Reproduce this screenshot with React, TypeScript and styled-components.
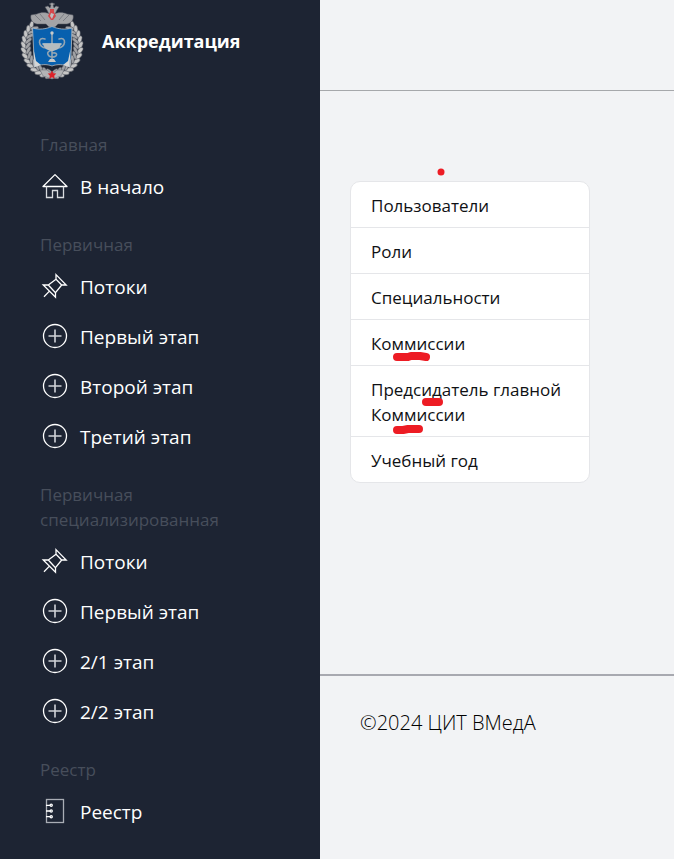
import React from "react";
import styled, { createGlobalStyle } from "styled-components";

const GlobalStyle = createGlobalStyle`
  * { box-sizing: border-box; }
  body {
    margin: 0;
    background: #f2f3f5;
    color: #000;
    font-family: "Segoe UI", "Open Sans", sans-serif;
    font-size: 18px;
    line-height: 25px;
  }
`;

const Page = styled.div`
  display: flex;
  min-height: 100vh;
`;

const Sidebar = styled.aside`
  flex: 0 0 320px;
  background: #1d2433;
  color: #fff;
`;

const Brand = styled.a`
  display: flex;
  align-items: center;
  gap: 18px;
  padding: 2px 20px;
  color: #fff;
  font-weight: 700;
  font-size: 18px;
  text-decoration: none;
`;

const Nav = styled.nav`
  display: flex;
  flex-direction: column;
  gap: 20px;
  padding: 49px 40px 20px;
`;

const SectionTitle = styled.h2`
  margin: 0 0 5px;
  color: #474e5b;
  font-size: 17px;
  font-weight: 500;
  line-height: 25px;
`;

const NavList = styled.ul`
  margin: 0;
  padding: 0;
  list-style: none;
`;

const NavLink = styled.a`
  display: flex;
  align-items: center;
  gap: 10px;
  height: 50px;
  color: #fff;
  font-size: 19px;
  text-decoration: none;
`;

const Main = styled.div`
  display: flex;
  flex: 1;
  flex-direction: column;
  min-width: 0;
`;

const TopBar = styled.header`
  height: 91px;
  border-bottom: 1px solid #a6a8ab;
`;

const Content = styled.main`
  flex: 1;
  padding: 90px 30px;
`;

const Menu = styled.ul`
  position: relative;
  width: 240px;
  max-width: 100%;
  margin: 0;
  padding: 0;
  list-style: none;
  background: #fff;
  border: 1px solid #e5e6e9;
  border-radius: 10px;
`;

const MenuItem = styled.li`
  position: relative;
  border-bottom: 1px solid #e5e6e9;
  &:last-child { border-bottom: 0; }
`;

const MenuLink = styled.a`
  display: block;
  padding: 11px 20px 9px;
  color: #0f1114;
  font-size: 17px;
  text-decoration: none;
`;

const Mark = styled.svg<{ $left: number; $top: number }>`
  position: absolute;
  left: ${(p) => p.$left}px;
  top: ${(p) => p.$top}px;
  fill: none;
  stroke: #ed1c24;
  stroke-width: 8;
  stroke-linecap: round;
  stroke-linejoin: round;
  pointer-events: none;
`;

const Footer = styled.footer`
  height: 185px;
  padding: 34px 40px;
  border-top: 2px solid #a8a9b0;
  font-size: 20px;
  font-weight: 300;
`;

const IconSvg = styled.svg`
  flex: none;
  fill: none;
  stroke: #fff;
  stroke-width: 1.3;
`;

type IconName = "home" | "pin" | "plus" | "book";

const shapes: Record<IconName, React.ReactNode> = {
  home: (
    <>
      <path d="M15 2.6 27 14.5H3Z" strokeLinejoin="round" />
      <path d="M6.5 14.5v11h6v-7h5v7h6v-11" stroke="#d9dbdf" />
    </>
  ),
  pin: (
    <path d="M16 2.6 26.2 13H21.7L16 7.3ZM16 7.3 8.3 13M21.7 13 15.5 20.7M3.2 13H8.3L15.5 20.7V25.2ZM9.2 19.4 4 24.7" />
  ),
  plus: (
    <>
      <circle cx="15" cy="14" r="11.5" />
      <path d="M8.5 14h13M15 7.5v13" stroke="#d0d2d7" strokeWidth="1.6" />
    </>
  ),
  book: (
    <>
      <rect x="6.5" y="2.5" width="17" height="23" stroke="#a9adb5" />
      <path d="M6 8.3h4M6 14h4M6 19.7h4" />
      <circle cx="11.2" cy="8.3" r="1.1" />
      <circle cx="11.2" cy="14" r="1.1" />
      <circle cx="11.2" cy="19.7" r="1.1" />
    </>
  ),
};

const Icon = ({ name }: { name: IconName }) => (
  <IconSvg width="30" height="30" viewBox="0 0 30 30" aria-hidden="true">
    {shapes[name]}
  </IconSvg>
);

const leafAngles = Array.from({ length: 13 }, (_, i) => -46 + i * 10.6);

const Wreath = () => (
  <g stroke="#4b4f59" strokeWidth="0.5">
    {[1, -1].map((side) =>
      leafAngles.map((deg, i) => {
        const a = (deg * Math.PI) / 180;
        const x = 32 + side * 26 * Math.cos(a);
        const y = 44 + 28 * Math.sin(a);
        const tilt = side * (deg + 90);
        return (
          <g key={`${side}${i}`} transform={`translate(${x} ${y}) rotate(${tilt})`}>
            <ellipse cx="0" cy={-2.6} rx="4.4" ry="2" fill="#c6c6c6" transform={`rotate(${side * 32})`} />
            <ellipse cx="0" cy={2.4} rx="4.2" ry="1.7" fill="#a2a3a6" transform={`rotate(${side * -32})`} />
          </g>
        );
      })
    )}
  </g>
);

const Emblem = () => (
  <svg width="64" height="79" viewBox="0 0 64 79" role="img" aria-label="Эмблема">
    <Wreath />
    <g fill="#a3a4a7" stroke="#555963" strokeWidth="0.5">
      <path d="M30 12C26 10 21 10 17 12L11 13C10 17 12 21 17 22L26 22 29 25H35L38 22 47 22C52 21 54 17 53 13L47 12C43 10 38 10 34 12Z" />
      <path d="M27 8 25 5 28 4 30 6 31 3 29 2 32 .7 35 2 33 3 34 6 36 4 39 5 37 8 35 12H29Z" />
      <path d="M15 13 21 19M20 12 25 18M49 13 43 19M44 12 39 18" fill="none" />
    </g>
    <path d="M30 7h4v3l2 4-3 4h-2l-3-4 2-4Z" fill="#d5474b" />
    <path d="m31 11 3 1-2 5-2-3Z" fill="#bfc0c1" />
    <path
      d="M12.5 26C19 28 26 27 32 24.5 38 27 45 28 52 26L51 55 49.5 65C43 62 37 62 32 64 27 62 21 62 14.5 65L14 55Z"
      fill="#0860ae"
      stroke="#b7bec4"
      strokeWidth="0.8"
    />
    <path d="M13.5 47 16 59 21 63 14.5 65ZM50.5 47 48 59 43 63 49.5 65Z" fill="#d5d6d6" />
    <g fill="none" stroke="#93a5b3" strokeWidth="1.6" strokeLinecap="round">
      <path d="M32 31V57M25 37C17 34 18 46 26 46H38C46 46 47 34 39 37M32 48C24 50 29 55 32 55 38 55 38 50 33 51" />
      <path d="M23 42H41" stroke="#c9ccca" />
    </g>
    <path d="M23 42H41C40 47 35 49 32 49S24 47 23 42Z" fill="#b5bcbf" />
    <path d="M28 60 30 57H34L36 60Z" fill="#c6c9c9" />
    <circle cx="32" cy="31" r="1.7" fill="#c8caca" />
    <path d="M20 68 27 68 32 72 37 68 44 68 41 74 32 77 23 74Z" fill="#b3b4b6" stroke="#656873" strokeWidth="0.5" />
    <path d="m32 68.5 1.3 2.7 3 .4-2.1 2.1.5 3-2.7-1.4-2.7 1.4.5-3-2.1-2.1 3-.4Z" fill="#dc2229" />
  </svg>
);

const sections: { title: string; items: [IconName, string][] }[] = [
  { title: "Главная", items: [["home", "В начало"]] },
  {
    title: "Первичная",
    items: [
      ["pin", "Потоки"],
      ["plus", "Первый этап"],
      ["plus", "Второй этап"],
      ["plus", "Третий этап"],
    ],
  },
  {
    title: "Первичная специализированная",
    items: [
      ["pin", "Потоки"],
      ["plus", "Первый этап"],
      ["plus", "2/1 этап"],
      ["plus", "2/2 этап"],
    ],
  },
  { title: "Реестр", items: [["book", "Реестр"]] },
];

type Stroke = { left: number; top: number; d: string };

const menu: { label: string; marks?: Stroke[] }[] = [
  { label: "Пользователи" },
  { label: "Роли" },
  { label: "Специальности" },
  {
    label: "Коммиссии",
    marks: [{ left: 40, top: 28, d: "M6 9H17L20 8H29L35 9" }],
  },
  {
    label: "Предсидатель главной Коммиссии",
    marks: [
      { left: 68, top: 28, d: "M7 8H20" },
      { left: 40, top: 55, d: "M6 9H12L17 8H28" },
    ],
  },
  { label: "Учебный год" },
];

export default function App() {
  return (
    <>
      <GlobalStyle />
      <Page>
        <Sidebar>
          <Brand href="#">
            <Emblem />
            Аккредитация
          </Brand>
          <Nav>
            {sections.map((section) => (
              <section key={section.title}>
                <SectionTitle>{section.title}</SectionTitle>
                <NavList>
                  {section.items.map(([icon, label]) => (
                    <li key={label}>
                      <NavLink href="#">
                        <Icon name={icon} />
                        {label}
                      </NavLink>
                    </li>
                  ))}
                </NavList>
              </section>
            ))}
          </Nav>
        </Sidebar>
        <Main>
          <TopBar />
          <Content>
            <Menu>
              {menu.map((item) => (
                <MenuItem key={item.label}>
                  <MenuLink href="#">{item.label}</MenuLink>
                  {item.marks?.map((m) => (
                    <Mark key={m.top} $left={m.left} $top={m.top} width="44" height="16" aria-hidden="true">
                      <path d={m.d} />
                    </Mark>
                  ))}
                  {item.label === "Пользователи" && (
                    <Mark $left={84} $top={-16} width="12" height="12" aria-hidden="true">
                      <circle cx="6" cy="6" r="3.5" fill="#ed1c24" stroke="none" />
                    </Mark>
                  )}
                </MenuItem>
              ))}
            </Menu>
          </Content>
          <Footer>©2024 ЦИТ ВМедА</Footer>
        </Main>
      </Page>
    </>
  );
}
